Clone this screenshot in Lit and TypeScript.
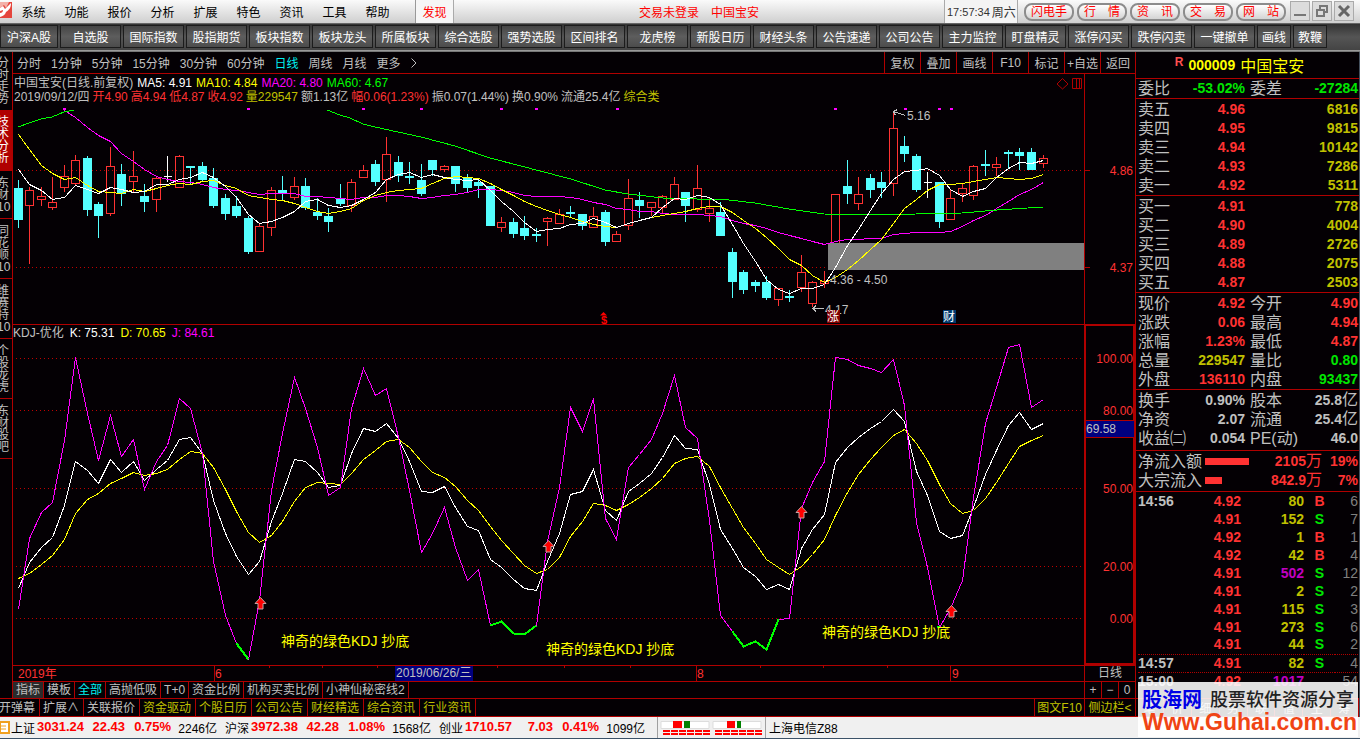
import { LitElement, html, svg, css } from "lit";
import { customElement } from "lit/decorators.js";

type Candle = [string, number, number, number, number];

// [kind, high, body top, body bottom, low]; kinds: u = rising, d = falling, f = flat
const CANDLES: Candle[] = [
  ["d", 180, 188, 220, 228], ["u", 187, 190, 205, 264], ["u", 187, 196, 199, 206], ["u", 177, 202, 207, 210], ["u", 165, 176, 187, 192],
  ["u", 155, 160, 183, 185], ["d", 156, 158, 210, 216], ["d", 202, 204, 216, 238], ["u", 147, 166, 213, 216], ["d", 164, 174, 194, 206],
  ["u", 151, 176, 181, 193], ["d", 184, 196, 202, 212], ["u", 176, 178, 199, 212], ["f", 156, 176, 177, 182], ["u", 155, 156, 187, 187],
  ["d", 166, 166, 168, 184], ["d", 162, 166, 180, 182], ["d", 168, 178, 206, 208], ["d", 194, 198, 214, 220], ["d", 196, 206, 216, 218],
  ["d", 216, 218, 252, 254], ["u", 224, 226, 251, 251], ["u", 187, 190, 227, 236], ["d", 176, 190, 193, 200], ["u", 177, 186, 197, 200],
  ["d", 178, 186, 208, 210], ["d", 198, 212, 216, 220], ["d", 208, 216, 222, 232], ["d", 184, 198, 204, 206], ["u", 179, 182, 205, 212],
  ["u", 165, 170, 177, 177], ["d", 160, 164, 182, 186], ["u", 137, 154, 179, 202], ["d", 156, 162, 176, 182], ["d", 162, 176, 178, 184],
  ["d", 164, 180, 194, 196], ["d", 160, 160, 170, 176], ["u", 165, 166, 169, 172], ["d", 166, 166, 184, 192], ["d", 174, 178, 188, 192],
  ["d", 180, 182, 186, 198], ["d", 186, 186, 226, 226], ["u", 217, 222, 227, 232], ["d", 218, 222, 234, 238], ["d", 216, 228, 236, 240],
  ["d", 228, 234, 236, 242], ["u", 217, 218, 221, 246], ["u", 209, 214, 223, 224], ["d", 206, 212, 214, 218], ["d", 214, 214, 226, 230],
  ["u", 207, 216, 227, 227], ["d", 210, 212, 242, 246], ["u", 231, 234, 241, 242], ["u", 179, 198, 225, 230], ["d", 192, 200, 206, 218],
  ["u", 202, 202, 207, 216], ["u", 195, 196, 207, 214], ["u", 177, 184, 199, 199], ["d", 192, 192, 206, 222], ["u", 165, 188, 209, 212],
  ["u", 197, 208, 213, 222], ["d", 202, 212, 236, 236], ["d", 248, 252, 282, 298], ["d", 270, 272, 290, 294], ["d", 280, 282, 286, 292],
  ["d", 276, 282, 298, 300], ["u", 288, 288, 299, 306], ["d", 290, 296, 298, 302], ["u", 255, 272, 287, 292], ["u", 281, 282, 303, 307],
  ["u", 271, 281, 283, 288], ["u", 194, 194, 243, 243], ["d", 160, 186, 194, 204], ["u", 177, 194, 203, 210], ["d", 174, 178, 190, 198],
  ["d", 172, 182, 188, 198], ["u", 112, 128, 183, 196], ["d", 136, 146, 154, 162], ["d", 154, 156, 190, 192], ["f", 172, 182, 183, 198],
  ["d", 182, 182, 222, 228], ["u", 190, 198, 219, 219], ["u", 184, 188, 193, 202], ["u", 165, 166, 195, 200], ["d", 150, 164, 166, 176],
  ["u", 157, 164, 167, 176], ["d", 150, 152, 154, 168], ["d", 148, 152, 156, 170], ["d", 148, 152, 170, 170], ["u", 155, 158, 163, 168],
];

const MA5 = [169, 184, 190, 199, 197, 185, 189, 193, 187, 189, 192, 191, 184, 184, 179, 177, 172, 177, 186, 197, 214, 223, 221, 217, 211, 201, 199, 205, 207, 205, 199, 192, 179, 174, 172, 177, 174, 177, 179, 180, 179, 190, 201, 211, 222, 231, 229, 228, 224, 223, 218, 222, 227, 223, 220, 217, 207, 198, 199, 195, 197, 204, 224, 243, 261, 279, 289, 293, 288, 288, 284, 267, 245, 229, 210, 193, 179, 171, 170, 168, 175, 189, 196, 191, 188, 177, 168, 162, 163, 160];
const MA10 = [134, 149, 165, 173, 179, 177, 185, 191, 192, 193, 189, 191, 188, 185, 183, 184, 181, 180, 185, 188, 195, 197, 199, 200, 203, 207, 211, 213, 211, 208, 200, 195, 192, 190, 189, 188, 183, 178, 176, 177, 178, 183, 189, 195, 201, 206, 210, 214, 217, 221, 224, 226, 227, 223, 220, 217, 215, 213, 211, 208, 206, 206, 212, 220, 228, 237, 248, 259, 265, 275, 282, 277, 269, 260, 249, 239, 223, 208, 199, 190, 184, 184, 183, 181, 179, 177, 178, 179, 178, 174];
const MA20 = [110, 117, 127, 135, 141, 153, 161, 169, 176, 179, 181, 182, 184, 187, 189, 190, 192, 194, 193, 193, 193, 196, 196, 197, 198, 199, 197, 197, 195, 195, 196, 198, 197, 195, 194, 192, 189, 189, 190, 192, 195, 196, 196, 196, 197, 199, 202, 204, 208, 209, 211, 211, 213, 214, 214, 214, 215, 216, 220, 223, 225, 228, 232, 235, 238, 241, 244, 241, 239, 239, 238, 238, 234, 233, 232, 232, 232, 231, 226, 220, 215, 208, 201, 194, 189, 182];
const K = [588, 562, 547, 537, 505, 461, 470, 483, 459, 472, 461, 480, 469, 460, 439, 437, 453, 500, 533, 556, 574, 561, 521, 493, 459, 461, 472, 487, 485, 453, 428, 431, 423, 438, 461, 491, 492, 486, 507, 526, 530, 559, 567, 579, 588, 590, 561, 533, 494, 491, 469, 510, 520, 491, 483, 473, 457, 435, 448, 449, 484, 529, 548, 567, 576, 589, 584, 589, 548, 529, 514, 462, 447, 437, 428, 421, 409, 421, 471, 495, 531, 538, 535, 507, 474, 450, 425, 412, 429, 423];
const D = [578, 573, 564, 555, 539, 513, 499, 493, 483, 478, 472, 475, 473, 469, 459, 451, 453, 467, 489, 511, 532, 542, 535, 521, 501, 487, 482, 483, 484, 473, 459, 450, 441, 439, 447, 461, 472, 477, 486, 500, 510, 526, 540, 553, 565, 573, 569, 557, 536, 521, 503, 505, 510, 504, 497, 488, 478, 463, 458, 456, 466, 487, 508, 527, 543, 559, 567, 574, 566, 554, 539, 515, 492, 474, 459, 447, 435, 429, 443, 460, 484, 503, 513, 510, 498, 482, 463, 446, 440, 435];
const J = [609, 538, 512, 502, 440, 357, 413, 460, 415, 456, 439, 489, 461, 445, 398, 408, 453, 561, 615, 643, 659, 600, 490, 433, 377, 408, 447, 495, 487, 408, 368, 395, 388, 437, 490, 552, 533, 507, 547, 580, 569, 625, 621, 633, 634, 625, 541, 487, 407, 431, 398, 518, 539, 467, 454, 439, 413, 375, 427, 438, 520, 615, 631, 646, 641, 649, 619, 618, 508, 482, 461, 357, 359, 365, 368, 372, 359, 405, 522, 567, 627, 608, 580, 497, 423, 387, 347, 344, 407, 399];

const xAt = (i: number) => Math.floor(18 + i * 11.517) + 0.5;
const points = (ys: number[], from = 0) => ys.map((y, i) => `${xAt(i + from)},${y + 0.5}`).join(" ");

const MENU = ["系统", "功能", "报价", "分析", "扩展", "特色", "资讯", "工具", "帮助"];
const TOOLS = ["沪深A股", "自选股", "国际指数", "股指期货", "板块指数", "板块龙头", "所属板块", "综合选股", "强势选股", "区间排名", "龙虎榜", "新股日历", "财经头条", "公告速递", "公司公告", "主力监控", "盯盘精灵", "涨停闪买", "跌停闪卖", "一键撤单"];
const PILLS = ["闪电手", "行　情", "资　讯", "交　易", "网　站"];
const PERIODS = ["分时", "1分钟", "5分钟", "15分钟", "30分钟", "60分钟", "日线", "周线", "月线", "更多"];
const CHART_TOOLS = ["复权", "叠加", "画线", "F10", "标记", "+自选", "返回"];
const RAIL: [string, number][] = [["分时走势", 58], ["技术分析", 61], ["东财⑩", 48], ["同花顺⑩", 60], ["维赛特⑩", 60], ["个股龙虎", 60], ["东财股吧", 60]];
const TABS = ["指标", "模板", "全部", "高抛低吸", "T+0", "资金比例", "机构买卖比例", "小神仙秘密线2"];
const LINKS = ["开弹幕", "扩展∧", "关联报价", "资金驱动", "个股日历", "公司公告", "财经精选", "综合资讯", "行业资讯"];
const SELL = [["卖五", "4.96", "6816"], ["卖四", "4.95", "9815"], ["卖三", "4.94", "10142"], ["卖二", "4.93", "7286"], ["卖一", "4.92", "5311"]];
const BUY = [["买一", "4.91", "778"], ["买二", "4.90", "4004"], ["买三", "4.89", "2726"], ["买四", "4.88", "2075"], ["买五", "4.87", "2503"]];
const STATS = [
  ["现价", "4.92", "r", "今开", "4.90", "r"], ["涨跌", "0.06", "r", "最高", "4.94", "r"], ["涨幅", "1.23%", "r", "最低", "4.87", "r"],
  ["总量", "229547", "y", "量比", "0.80", "g"], ["外盘", "136110", "r", "内盘", "93437", "g"],
];
const BASICS = [["换手", "0.90%", "w", "股本", "25.8亿", "w"], ["净资", "2.07", "w", "流通", "25.4亿", "w"], ["收益㈡", "0.054", "w", "PE(动)", "46.0", "w"]];
const TICKS = [
  ["14:56", "4.92", "80", "B", "6"], ["", "4.91", "152", "S", "7"], ["", "4.92", "1", "B", "1"], ["", "4.92", "42", "B", "4"], ["", "4.91", "502", "S", "12"],
  ["", "4.91", "2", "S", "2"], ["", "4.91", "115", "S", "3"], ["", "4.91", "273", "S", "6"], ["", "4.91", "44", "S", "2"], ["14:57", "4.91", "82", "S", "4"], ["15:00", "4.92", "1017", "", "54"],
];
const INDICES = [
  ["上证", "3031.24", "22.43", "0.75%", "2246亿"], ["沪深", "3972.38", "42.28", "1.08%", "1568亿"], ["创业", "1710.57", "7.03", "0.41%", "1099亿"],
];

const shared = css`
  * { box-sizing: border-box; }
  button { font: inherit; color: inherit; background: none; border: 0; padding: 0; margin: 0; white-space: nowrap; cursor: pointer; }
  svg { display: block; }
`;

@customElement("top-bar")
class TopBar extends LitElement {
  static styles = [shared, css`
    :host { display: block; font-size: 12px; }
    .menu { display: flex; height: 23px; background: linear-gradient(#fafafa, #cfcfcf); color: #000; align-items: stretch; }
    .logo { width: 12px; }
    .items button { width: 43px; height: 23px; }
    .found { width: 39px; margin-left: 16px; background: #f6f6f6; border-left: 1px solid #999; border-right: 1px solid #aaa; color: #f00; }
    .center { flex: 1; display: flex; justify-content: center; align-items: center; gap: 12px; color: #f00; }
    .clock { width: 74px; padding-left: 2px; display: flex; align-items: center; gap: 2px; background: #f4f4f4; border-left: 1px solid #aaa; border-right: 1px solid #aaa; color: #333; white-space: nowrap; }
    .clock .time { font-size: 11px; }
    .pills { display: flex; gap: 3px; margin-left: 6px; align-items: center; }
    .pills button { width: 50px; height: 18px; border: 2px solid #8c8c8c; border-radius: 8px; background: linear-gradient(#fff, #d4d4d4); color: #f00; line-height: 14px; }
    .win { display: flex; gap: 2px; margin: 1px 6px 0 4px; }
    .win button { width: 20px; height: 20px; border: 1px solid #aaa; background: #dcdcdc; display: grid; place-items: center; }
    .tools { display: flex; height: 27px; gap: 2px; padding-top: 1px; background: linear-gradient(#333, #555 50%, #444); border-top: 1px solid #666; overflow: hidden; }
    .tools button { width: 61px; flex: none; height: 23px; border: 1px solid #1c1c1c; background: linear-gradient(#454545, #5d5d5d 50%, #4c4c4c); color: #fff; }
    .tools button:first-child { width: 58px; }
    .tools .small { width: 34px; }
    .rule { height: 2px; background: #999; border-bottom: 1px solid #777; }
  `];
  render() {
    return html`
      <nav class="menu">
        <svg class="logo" width="12" height="20" viewBox="0 0 12 20"><path d="M0 2H12V18H0Z" fill="#e5453c" /><path d="M0 2H9L6 8L4 5L0 8Z" fill="#f4b0a8" /><path d="M0 8L3 6L5 9L11 3C11 8 9 10 6 12C5 15 3 16 0 17V13C2 13 3 12 3 10L0 11Z" fill="#fff" /></svg>
        <div class="items">${MENU.map((m) => html`<button>${m}</button>`)}</div>
        <button class="found">发现</button>
        <div class="center"><span>交易未登录</span><span>中国宝安</span></div>
        <div class="clock"><span class="time">17:57:34</span><span>周六</span></div>
        <div class="pills">${PILLS.map((p) => html`<button>${p}</button>`)}</div>
        <div class="win">
          <button aria-label="最小化"><svg width="14" height="14"><path d="M1 11H13" stroke="#777" stroke-width="2" /></svg></button>
          <button aria-label="还原"><svg width="14" height="14" fill="none" stroke="#777" stroke-width="2"><path d="M5 5V2H12V8H9M2 6H9V12H2Z" /></svg></button>
          <button aria-label="关闭"><svg width="14" height="14" stroke="#666" stroke-width="3"><path d="M2 2L12 12M12 2L2 12" /></svg></button>
        </div>
      </nav>
      <nav class="tools">
        ${TOOLS.map((t) => html`<button>${t}</button>`)}
        <button class="small">画线</button><button class="small">教鞭</button>
      </nav>
      <div class="rule"></div>`;
  }
}

@customElement("chart-area")
class ChartArea extends LitElement {
  static styles = [shared, css`
    :host { display: grid; grid-template-columns: 1fr 51px; font-size: 12px; color: #c0c0c0; }
    .plot { width: 100%; }
    .info { height: 32px; padding: 2px 0 0 1px; line-height: 14px; position: relative; }
    .info div { display: flex; gap: 3px; white-space: nowrap; }
    .info .ma { gap: 4px; }
    .tag { position: absolute; right: 1px; top: 4px; }
    .kdj { border-top: 1px solid #b00000; min-width: 0; }
    .head { height: 16px; line-height: 16px; display: flex; gap: 6px; }
    .w { color: #fff; } .y { color: #ff0; } .m { color: #f0f; } .g { color: #0f0; } .r { color: #ff3232; } .o { color: #c0c000; }
    .dates { border-top: 1px solid #b00000; min-width: 0; }
    .period { border: 0 solid #b00000; border-width: 1px 0 0 1px; height: 16px; text-align: center; line-height: 15px; }
    text { font-size: 12px; fill: #c0c0c0; }
    .axis { fill: #ff3232; text-anchor: end; }
    .axis-left { fill: #ff3232; }
    .note { fill: #ff0; font-size: 14px; }
    .white { fill: #fff; }
    .dollar { fill: #f00; font-size: 11px; font-weight: 700; text-anchor: middle; }
    .cross { shape-rendering: crispEdges; fill: none; }
  `];

  private candle([kind, hi, top, bottom, lo]: Candle, i: number) {
    const x = xAt(i);
    if (kind === "d")
      return svg`<path d="M${x} ${hi}V${lo}" stroke="#54ffff" /><rect x=${x - 4.5} y=${top} width="9" height=${bottom - top} fill="#54ffff" />`;
    if (kind === "f") return svg`<path d="M${x} ${hi}V${lo}M${x - 4} ${top + 0.5}H${x + 4}" stroke="#fff" />`;
    return svg`<path d="M${x} ${hi}V${top}M${x} ${bottom}V${lo}M${x - 4} ${top + 0.5}H${x + 4}V${bottom + 0.5}H${x - 4}Z" stroke="#ff3232" />`;
  }

  private grid(ys: number[]) {
    return ys.map((y) => svg`<path class="cross" d="M-3000 ${y + 0.5}H1084" stroke="#c00000" stroke-dasharray="1 3" />`);
  }

  private upArrow(x: number, y: number) {
    return svg`<path transform="translate(${x} ${y})" d="M0.5 -5.5L6 0.5H3V6H-2V0.5H-5Z" fill="#f00" stroke="#c8a0a0" />`;
  }

  render() {
    return html`
      <div>
        <div class="info">
          <div class="ma"><span>中国宝安(日线.前复权)</span><span class="w">MA5: 4.91</span><span class="y">MA10: 4.84</span><span class="m">MA20: 4.80</span><span class="g">MA60: 4.67</span></div>
          <div><span>2019/09/12/四</span><span class="r">开4.90</span><span class="r">高4.94</span><span class="r">低4.87</span><span class="r">收4.92</span><span class="o">量229547</span><span>额1.13亿</span><span class="r">幅0.06(1.23%)</span><span>振0.07(1.44%)</span><span>换0.90%</span><span>流通25.4亿</span><span class="o">综合类</span></div>
          <svg class="tag" width="26" height="12" fill="none" stroke="#b00000"><path d="M5.5 .5L11 6L5.5 11L0 6Z" /><path d="M15.5 .5H24.5V10.5H15.5ZM19.5 .5V10.5M22.5 .5V10.5" /></svg>
        </div>
        <svg class="plot" height="218" viewBox="13 106 1071 218" preserveAspectRatio="xMaxYMid meet">
          ${this.grid([170, 267])}
          ${[63, 247, 362, 420, 500, 535, 616, 834, 904, 938, 950].map((x) => svg`<rect x=${x} y="108" width="3" height="2" fill="#f0f" />`)}
          <g class="cross">${CANDLES.map((c, i) => this.candle(c, i))}</g>
          <rect x="828" y="243" width="256" height="27" fill="#808080" />
          <g class="cross">
            <polyline points=${points(MA20, 4)} stroke="#f0f" />
            <polyline points="18,127 29,123 41,119 52,117 64,112 74,110" stroke="#0f0" />
            <polyline points="327,110 340,115 350,118 363,124 375,127 398,132 421,137 455,146 490,158 525,167 536,170 571,179 605,190 628,194 663,198 697,199 720,199 755,203 789,209 824,214 882,215 916,214 962,213 997,210 1043,207" stroke="#0f0" />
            <polyline points=${points(MA10)} stroke="#ff0" />
            <polyline points=${points(MA5)} stroke="#fff" />
            <path d="M905.5 115.5L893.5 111.5M897.5 109.5L893.5 111.5L895.5 115.5M824 308.5H813M816 305.5L813 308.5L816 311.5" stroke="#c0c0c0" />
          </g>
          <text x="907" y="120">5.16</text>
          <text x="830" y="284">4.36 - 4.50</text>
          <text x="825" y="314">4.17</text>
          <rect x="827" y="310" width="13" height="13" fill="#800000" /><text class="white" x="827" y="321">涨</text>
          <rect x="943" y="310" width="13" height="13" fill="#003a70" /><text class="white" x="943" y="321">财</text>
          <path d="M600 315.5L603.5 312L607 315.5Z" fill="#f00" />
          <text class="dollar" x="604" y="324">$</text>
        </svg>
      </div>
      <svg width="51" height="250" viewBox="1084 74 51 250">
        <path class="cross" d="M1084.5 74V324M1084 170.5H1090M1084 267.5H1090" stroke="#b00000" />
        <text class="axis" x="1133" y="175">4.86</text><text class="axis" x="1133" y="272">4.37</text>
      </svg>
      <div class="kdj">
        <div class="head"><span>KDJ-优化</span><span class="w">K: 75.31</span><span class="y">D: 70.65</span><span class="m">J: 84.61</span></div>
        <svg class="plot" height="324" viewBox="13 341 1071 324" preserveAspectRatio="xMaxYMid meet">
          ${this.grid([358, 410, 488, 566, 618])}
          <g class="cross">
            <polyline points=${points(K)} stroke="#fff" />
            <polyline points=${points(D)} stroke="#ff0" />
            <polyline points=${points(J)} stroke="#f0f" />
            ${[[19, 21], [41, 46], [62, 67]].map(([a, b]) => svg`<polyline points=${points(J.slice(a, b), a)} stroke="#0f0" stroke-width="2" />`)}
            <path d="M937 627H940" stroke="#0f0" stroke-width="2" />
          </g>
          ${this.upArrow(260, 603)}${this.upArrow(548, 546)}${this.upArrow(801, 512)}${this.upArrow(951, 611)}
          <text class="note" x="281" y="646">神奇的绿色KDJ 抄底</text>
          <text class="note" x="546" y="654">神奇的绿色KDJ 抄底</text>
          <text class="note" x="822" y="637">神奇的绿色KDJ 抄底</text>
        </svg>
      </div>
      <svg width="51" height="341" viewBox="1084 324 51 341">
        <path class="cross" d="M1085 325H1134V664H1085Z" stroke="#b00000" stroke-width="2" />
        <rect x="1086" y="421" width="48" height="16" fill="#000080" />
        <path class="cross" d="M1086 420.5H1134M1086 437.5H1134" stroke="#b00000" />
        ${[["100.00", 363], ["80.00", 415], ["50.00", 493], ["20.00", 571], ["0.00", 623]].map(([t, y]) => svg`<text class="axis" x="1133" y=${y}>${t}</text>`)}
        <text x="1086" y="433">69.58</text>
      </svg>
      <svg class="plot dates" height="16" viewBox="13 666 1071 15" preserveAspectRatio="xMaxYMid meet">
        <path class="cross" d="M214.5 666V681M696.5 666V681M950.5 666V681M269.5 666V668M322.5 666V668M377.5 666V668M497.5 666V668M564.5 666V668M630.5 666V668M760.5 666V668M823.5 666V668M887.5 666V668" stroke="#b00000" />
        <rect x="395" y="666" width="78" height="15" fill="#000080" />
        <text class="axis-left" x="18" y="678">2019年</text><text class="axis-left" x="215" y="678">6</text><text class="axis-left" x="697" y="678">8</text><text class="axis-left" x="952" y="678">9</text>
        <text x="396" y="677">2019/06/26/三</text>
      </svg>
      <div class="period">日线</div>`;
  }
}

@customElement("quote-panel")
class QuotePanel extends LitElement {
  static styles = [shared, css`
    :host { display: flex; flex-direction: column; width: 225px; flex: none; border-left: 1px solid #b00000; border-right: 1px solid #45505e; font-size: 16px; color: #c0c0c0; overflow: hidden; }
    h1 { margin: 0; height: 26px; display: flex; justify-content: center; align-items: center; gap: 5px; color: #ff0; font-size: 16px; font-weight: 400; padding-right: 16px; }
    h1 b { font-size: 14px; }
    h1 sup { font: 700 12px "Liberation Sans", sans-serif; color: #ff5050; align-self: flex-start; margin-top: 3px; }
    section { border-top: 1px solid #b00000; padding: 1px 1px 0 2px; }
    .tight { padding-top: 0; }
    .loose { padding-bottom: 2px; }
    .flows { padding-bottom: 1px; }
    table { width: 100%; border-collapse: collapse; table-layout: fixed; }
    th, td { padding: 0; height: 19px; line-height: 19px; white-space: nowrap; font-weight: 400; text-align: left; }
    .l1 { width: 47px; } .v1 { width: 60px; } .l2 { width: 46px; }
    .num { text-align: right; font-weight: 700; font-size: 14px; }
    .second { padding-left: 5px; }
    .unit { font-size: 16px; font-weight: 400; line-height: 1; }
    .r { color: #ff3232; } .g { color: #00e600; } .y { color: #c0c000; } .w { color: #c0c0c0; } .m { color: #c000c0; }
    .flow { display: grid; grid-template-columns: 67px 1fr 56px 36px; align-items: center; height: 19px; line-height: 19px; }
    .bar { height: 7px; background: #ff3232; }
    .ticks { flex: 1; padding-top: 0; }
    .ticks td, .ticks th { height: 18px; line-height: 17px; font-size: 14px; }
    .ticks th { font-weight: 700; }
    .ticks .lined td, .ticks .lined th { border-top: 1px dotted #b00000; }
    .side { text-align: center; font-weight: 700; }
    .count { text-align: right; color: #808080; }
    .t1 { width: 50px; } .t2 { width: 53px; } .t3 { width: 63px; } .t4 { width: 31px; }
    .tabs { display: flex; height: 19px; border: solid #b00000; border-width: 1px 0; font-size: 12px; }
    .tabs button { flex: 1; border-right: 1px solid #b00000; }
  `];

  private num(v: string, cls: string) {
    const unit = v.endsWith("亿") || v.endsWith("万");
    return html`<td class="num ${cls}">${unit ? html`${v.slice(0, -1)}<span class="unit">${v.slice(-1)}</span>` : v}</td>`;
  }
  private pairs(rows: string[][]) {
    return html`<table><colgroup><col class="l1"><col class="v1"><col class="l2"><col></colgroup>
      ${rows.map((r) => html`<tr><th>${r[0]}</th>${this.num(r[1], r[2])}<th class="second">${r[3]}</th>${this.num(r[4], r[5])}</tr>`)}</table>`;
  }
  private levels(rows: string[][]) {
    return html`<table><colgroup><col class="l1"><col class="v1"><col></colgroup>
      ${rows.map((r) => html`<tr><th>${r[0]}</th>${this.num(r[1], "r")}${this.num(r[2], "y")}</tr>`)}</table>`;
  }
  private flow(label: string, width: number, amount: string, unit: string, pct: string) {
    return html`<div class="flow"><span>${label}</span><div><div class="bar" style="width:${width}px"></div></div><span class="num r">${amount}<span class="unit">${unit}</span></span><span class="num r">${pct}</span></div>`;
  }
  render() {
    return html`
      <h1><sup>R</sup><b>000009</b><span>中国宝安</span></h1>
      <section class="tight">${this.pairs([["委比", "-53.02%", "g", "委差", "-27284", "g"]])}</section>
      <section>${this.levels(SELL)}</section>
      <section>${this.levels(BUY)}</section>
      <section>${this.pairs(STATS)}</section>
      <section class="loose">${this.pairs(BASICS)}</section>
      <section class="flows">${this.flow("净流入额", 44, "2105", "万", "19%")}${this.flow("大宗流入", 17, "842.9", "万", "7%")}</section>
      <section class="ticks"><table><colgroup><col class="t1"><col class="t2"><col class="t3"><col class="t4"><col></colgroup>
        ${TICKS.map((t, i) => html`<tr class=${i > 8 ? "lined" : ""}><th>${t[0]}</th><td class="num r">${t[1]}</td><td class="num ${+t[2] > 500 ? "m" : "y"}">${t[2]}</td><td class="side ${t[3] === "B" ? "r" : "g"}">${t[3]}</td><td class="count">${t[4]}</td></tr>`)}
      </table></section>
      <nav class="tabs">${["笔", "价", "细", "势", "联", "值", "主", "筹"].map((t) => html`<button>${t}</button>`)}</nav>`;
  }
}

@customElement("app-root")
class AppRoot extends LitElement {
  static styles = [shared, css`
    :host { display: block; position: relative; background: #040004; color: #c0c0c0; font: 12px "Liberation Sans", "Noto Sans CJK SC", sans-serif; overflow: hidden; }
    .body { display: flex; }
    .left { flex: 1; min-width: 0; }
    .work { display: flex; }
    .rail { width: 13px; flex: none; border-right: 1px solid #b00000; overflow: hidden; }
    .rail button { display: block; width: 12px; border-bottom: 1px solid #b00000; line-height: 12px; white-space: normal; }
    .rail span { display: block; width: 12px; margin-left: -3px; }
    .rail .plain { border-color: transparent; }
    .rail .on { background: #b00000; color: #fff; }
    .main { flex: 1; min-width: 0; }
    .periods { height: 22px; display: flex; align-items: center; border-bottom: 1px solid #b00000; padding-left: 4px; gap: 10px; }
    .periods .cyan, .tabs .cyan { color: #00f0f0; }
    .right { margin-left: auto; display: flex; }
    .right button { width: 36px; height: 21px; border-left: 1px solid #b00000; }
    .right button:last-child { width: 35px; }
    .tabs { display: flex; height: 17px; border-top: 1px solid #b00000; }
    .tabs button, .links button { padding: 0 4px 0 3px; border-right: 1px solid #b00000; line-height: 16px; }
    .tabs button { padding: 0 3px; }
    .tabs .on { background: #2b2b2b; }
    .zoom { margin-left: auto; display: flex; border-left: 1px solid #b00000; }
    .zoom .key { width: 17px; padding: 0; }
    .zoom .key:last-child { width: 16px; border-right: 0; }
    .links { display: flex; height: 19px; border: solid #b00000; border-width: 1px 0; }
    .links .y { color: #c0c000; }
    .links .first { margin-left: -4px; }
    .links .doc { margin-left: auto; border-left: 1px solid #b00000; padding: 0 2px; }
    .links .last { border-right: 0; padding: 0; width: 50px; }
    .status { display: flex; height: 22px; align-items: center; background: #f0f0f0; color: #000; border-bottom: 1px solid #3b5268; }
    .book { width: 11px; }
    .index { display: grid; grid-template-columns: 26px 46px 42px 46px 46px; width: 214px; white-space: nowrap; }
    .index b { color: #f00; font-size: 13px; line-height: 16px; text-align: right; }
    .index .amount { text-align: right; }
    .lights { border: solid #a0a0a0; border-width: 0 1px; height: 21px; padding: 3px 2px; margin: 0 3px 0 4px; }
    .mark { position: absolute; right: 2px; bottom: 2px; width: 220px; height: 55px; padding: 5px 0 0 4px; background: rgba(255, 255, 255, .88); white-space: nowrap; }
    .mark div { display: flex; align-items: center; gap: 8px; height: 22px; }
    .mark .name { color: #0000e6; font-size: 20px; }
    .mark .slogan { color: #222; font-size: 18px; font-weight: 500; }
    .mark .url { height: 26px; color: #f04414; font-size: 23px; font-weight: 700; }
  `];
  render() {
    const chars = (s: string) => [...s].map((c) => html`<span>${c === "⑩" ? "10" : c}</span>`);
    return html`
      <top-bar></top-bar>
      <div class="body">
        <div class="left">
          <div class="work">
            <nav class="rail">${RAIL.map(([t, h], i) => html`<button class=${i === 1 ? "on" : i === 0 ? "plain" : ""} style="height:${h}px">${chars(t)}</button>`)}</nav>
            <div class="main">
              <nav class="periods">
                ${PERIODS.map((p) => html`<button class=${p === "日线" ? "cyan" : ""}>${p}</button>`)}
                <svg width="6" height="10" fill="none" stroke="#c0c0c0"><path d="M.5 .5L5 5L.5 9.5" /></svg>
                <div class="right">${CHART_TOOLS.map((t) => html`<button>${t}</button>`)}</div>
              </nav>
              <chart-area></chart-area>
              <nav class="tabs">
                ${TABS.map((t, i) => html`<button class=${i === 0 ? "on" : i === 2 ? "cyan" : ""}>${t}</button>`)}
                <div class="zoom"><button class="key">+</button><button class="key">−</button><button class="key">0</button></div>
              </nav>
            </div>
          </div>
          <nav class="links">
            ${LINKS.map((t, i) => html`<button class=${i === 0 ? "first" : i > 2 ? "y" : ""}>${t}</button>`)}
            <button class="doc y">图文F10</button><button class="last y">侧边栏&lt;</button>
          </nav>
        </div>
        <quote-panel></quote-panel>
      </div>
      <footer class="status">
        <svg class="book" width="11" height="14"><path d="M0 1H9V12H0Z" fill="#fff" stroke="#f0a020" stroke-width="2" /><path d="M0 5H6M0 8H6" stroke="#f0a020" /></svg>
        ${INDICES.map((r) => html`<div class="index"><span>${r[0]}</span><b>${r[1]}</b><b>${r[2]}</b><b>${r[3]}</b><span class="amount">${r[4]}</span></div>`)}
        <div class="lights"><svg width="103" height="15" viewBox="0 0 103 15">
          <path d="M1 1.5H49V8.5H1ZM53 1.5H101V8.5H53Z" fill="#fff" stroke="#ddd" />
          <path d="M13 1H22V8H13ZM67 1H75V8H67Z" fill="#f00" /><path d="M24 1H30V8H24ZM77 1H81V8H77Z" fill="#008000" />
          <path d="M3 11H50M55 11H102" stroke="#f00" stroke-width="2" stroke-dasharray="7 1" /><path d="M3 14H50M55 14H102" stroke="#f00" stroke-width="2" stroke-dasharray="7 1" />
        </svg></div>
        <span>上海电信Z88</span>
      </footer>
      <div class="mark"><div><b class="name">股海网</b><span class="slogan">股票软件资源分享</span></div><div class="url">Www.Guhai.com.cn</div></div>`;
  }
}
